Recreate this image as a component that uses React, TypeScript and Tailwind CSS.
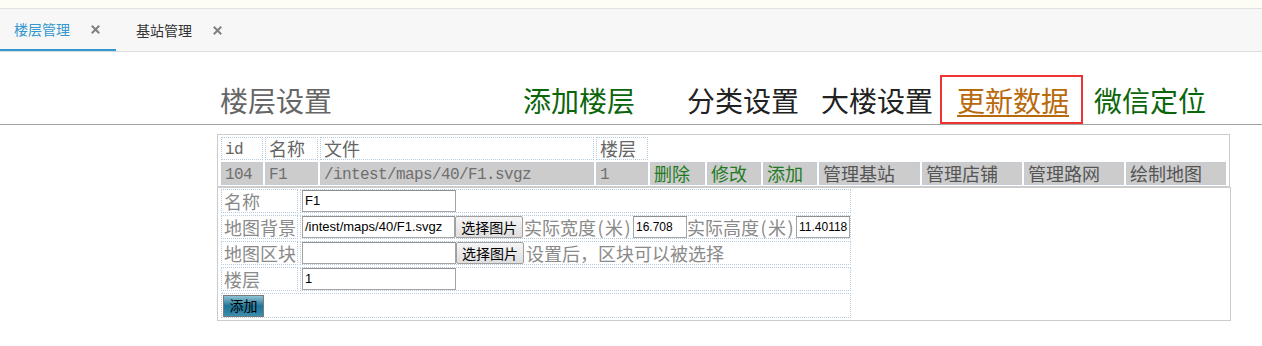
import React from "react";

const cjk = "font-['Noto_Sans_CJK_SC',sans-serif]";
const mono = "font-['Liberation_Mono','Noto_Sans_CJK_SC',monospace]";

function CloseX() {
  return (
    <svg width="9" height="9" viewBox="0 0 9 9" className="block">
      <path d="M1.5 1.5 L7.5 7.5 M7.5 1.5 L1.5 7.5" stroke="#808080" strokeWidth="2" strokeLinecap="square" />
    </svg>
  );
}

function Paren({ c }: { c: string }) {
  return <span className="inline-block w-[9px] text-center">{c}</span>;
}

const headCells = [
  { w: "w-[42px]", t: "id", m: true },
  { w: "w-[53px]", t: "名称" },
  { w: "w-[274px]", t: "文件" },
  { w: "w-[52px]", t: "楼层" },
];

const dataCells: { w: string; t: string; m?: boolean; green?: boolean }[] = [
  { w: "w-[42px]", t: "104", m: true },
  { w: "w-[53px]", t: "F1", m: true },
  { w: "w-[274px]", t: "/intest/maps/40/F1.svgz", m: true },
  { w: "w-[52px]", t: "1", m: true },
  { w: "w-[55px]", t: "删除", green: true },
  { w: "w-[54px]", t: "修改", green: true },
  { w: "w-[54px]", t: "添加", green: true },
  { w: "w-[101px]", t: "管理基站" },
  { w: "w-[100px]", t: "管理店铺" },
  { w: "w-[100px]", t: "管理路网" },
  { w: "w-[100px]", t: "绘制地图" },
];

function TextInput({ value, w = "w-[154px]", size = "text-[13px]" }: { value: string; w?: string; size?: string }) {
  return (
    <div
      className={`${w} h-[22px] border border-[#a5a5a5] border-t-[#8f8f8f] bg-white flex items-center pl-[2px] overflow-hidden whitespace-nowrap text-black ${size} font-['Liberation_Sans',Arial,sans-serif]`}
    >
      {value}
    </div>
  );
}

function PickButton() {
  return (
    <div className="w-[68px] h-[22px] border border-[#a0a0a0] rounded-[2px] bg-linear-to-b from-[#f6f6f6] to-[#dedede] flex items-center justify-center text-[14px] text-black">
      选择图片
    </div>
  );
}

const cellBorder = "border border-dotted border-[#b7cbe0]";

export default function App() {
  return (
    <div className={`w-[1262px] h-[346px] bg-white overflow-hidden ${cjk}`}>
      {/* top strip */}
      <div className="h-[9px] bg-[#fdfdf5] border-b border-[#e2e2e2]" />

      {/* tabs */}
      <div className="h-[43px] bg-[#f7f7f7] border-b border-[#dcdcdc] flex">
        <div className="w-[116px] h-[42px] border-b-2 border-[#3497cf] flex items-center pl-[14px]">
          <span className="text-[14px] text-[#3497cf] leading-none">楼层管理</span>
          <span className="ml-[21px]">
            <CloseX />
          </span>
        </div>
        <div className="w-[120px] h-[42px] flex items-center pl-[20px]">
          <span className="text-[14px] text-[#333] leading-none">基站管理</span>
          <span className="ml-[21px]">
            <CloseX />
          </span>
        </div>
      </div>

      {/* header */}
      <div className="border-b border-[#a3a3a3] pt-[23px]">
        <div className="h-[49px] flex items-center pl-[220px] text-[28px] leading-none">
          <span className="text-[#666]">楼层设置</span>
          <span className="ml-[191px] text-[#0b650b]">添加楼层</span>
          <span className="ml-[52px] text-[#222]">分类设置</span>
          <span className="ml-[22px] text-[#222]">大楼设置</span>
          <div className="ml-[7px] h-[49px] border-2 border-[#ee3333] flex items-center pl-[15px] pr-[12px]">
            <span className="text-[#b8690c] underline underline-offset-[3px] decoration-2">更新数据</span>
          </div>
          <span className="ml-[11px] text-[#0b650b]">微信定位</span>
        </div>
      </div>

      {/* list table */}
      <div className="mt-[9px] ml-[217px] w-[1013px] border border-[#cccccc] pl-[3px] pt-[2px] pb-[1px] flex flex-col gap-[2px]">
        <div className="flex gap-[2px] h-[23px]">
          {headCells.map((c) => (
            <div
              key={c.t}
              className={`${c.w} ${cellBorder} bg-white flex items-center pl-[3px] text-[#666] ${c.m ? `${mono} text-[16px] tracking-[-0.6px] pt-[2px]` : "text-[18px]"}`}
            >
              {c.t}
            </div>
          ))}
        </div>
        <div className="flex gap-[2px] h-[23px]">
          {dataCells.map((c) => (
            <div
              key={c.t}
              className={`${c.w} border border-dotted border-[#bfcadb] bg-[#cccccc] flex items-center pl-[3px] whitespace-nowrap ${
                c.m ? `${mono} text-[16px] tracking-[-0.6px] pt-[2px] text-[#6f6f6f]` : "text-[18px]"
              } ${c.green ? "text-[#1f7a1f]" : c.m ? "" : "text-[#555]"}`}
            >
              {c.t}
            </div>
          ))}
        </div>
      </div>

      {/* form */}
      <div className="ml-[217px] w-[1014px] h-[134px] border border-[#cccccc] pl-[3px] pt-[1px] flex flex-col gap-[2px] text-[18px] text-[#8a8a8a]">
        <div className="flex gap-[2px] h-[24px]">
          <div className={`w-[77px] ${cellBorder} flex items-center pl-[2px]`}>名称</div>
          <div className={`w-[551px] ${cellBorder} flex items-center pl-[1px]`}>
            <TextInput value="F1" />
          </div>
        </div>
        <div className="flex gap-[2px] h-[24px]">
          <div className={`w-[77px] ${cellBorder} flex items-center pl-[2px]`}>地图背景</div>
          <div className={`w-[551px] ${cellBorder} flex items-center pl-[1px] whitespace-nowrap`}>
            <TextInput value="/intest/maps/40/F1.svgz" />
            <PickButton />
            <span className="ml-[1px] leading-none">
              实际宽度<Paren c="(" />米<Paren c=")" />
            </span>
            <span className="ml-[1px]">
              <TextInput value="16.708" w="w-[54px]" size="text-[12px]" />
            </span>
            <span className="leading-none">
              实际高度<Paren c="(" />米<Paren c=")" />
            </span>
            <span className="ml-[1px]">
              <TextInput value="11.40118" w="w-[54px]" size="text-[12px]" />
            </span>
          </div>
        </div>
        <div className="flex gap-[2px] h-[24px]">
          <div className={`w-[77px] ${cellBorder} flex items-center pl-[2px]`}>地图区块</div>
          <div className={`w-[551px] ${cellBorder} flex items-center pl-[1px] whitespace-nowrap`}>
            <TextInput value="" />
            <PickButton />
            <span className="ml-[2px] leading-none">设置后，区块可以被选择</span>
          </div>
        </div>
        <div className="flex gap-[2px] h-[24px]">
          <div className={`w-[77px] ${cellBorder} flex items-center pl-[2px]`}>楼层</div>
          <div className={`w-[551px] ${cellBorder} flex items-center pl-[1px]`}>
            <TextInput value="1" />
          </div>
        </div>
        <div className="flex h-[25px]">
          <div className={`w-[630px] ${cellBorder} flex items-center pl-[1px]`}>
            <div className="w-[41px] h-[22px] border border-[#7a7a7a] bg-linear-to-b from-[#8cc3d6] via-[#1d7496] to-[#3a8fae] flex items-center justify-center text-[14px] text-black">
              添加
            </div>
          </div>
        </div>
      </div>
    </div>
  );
}
